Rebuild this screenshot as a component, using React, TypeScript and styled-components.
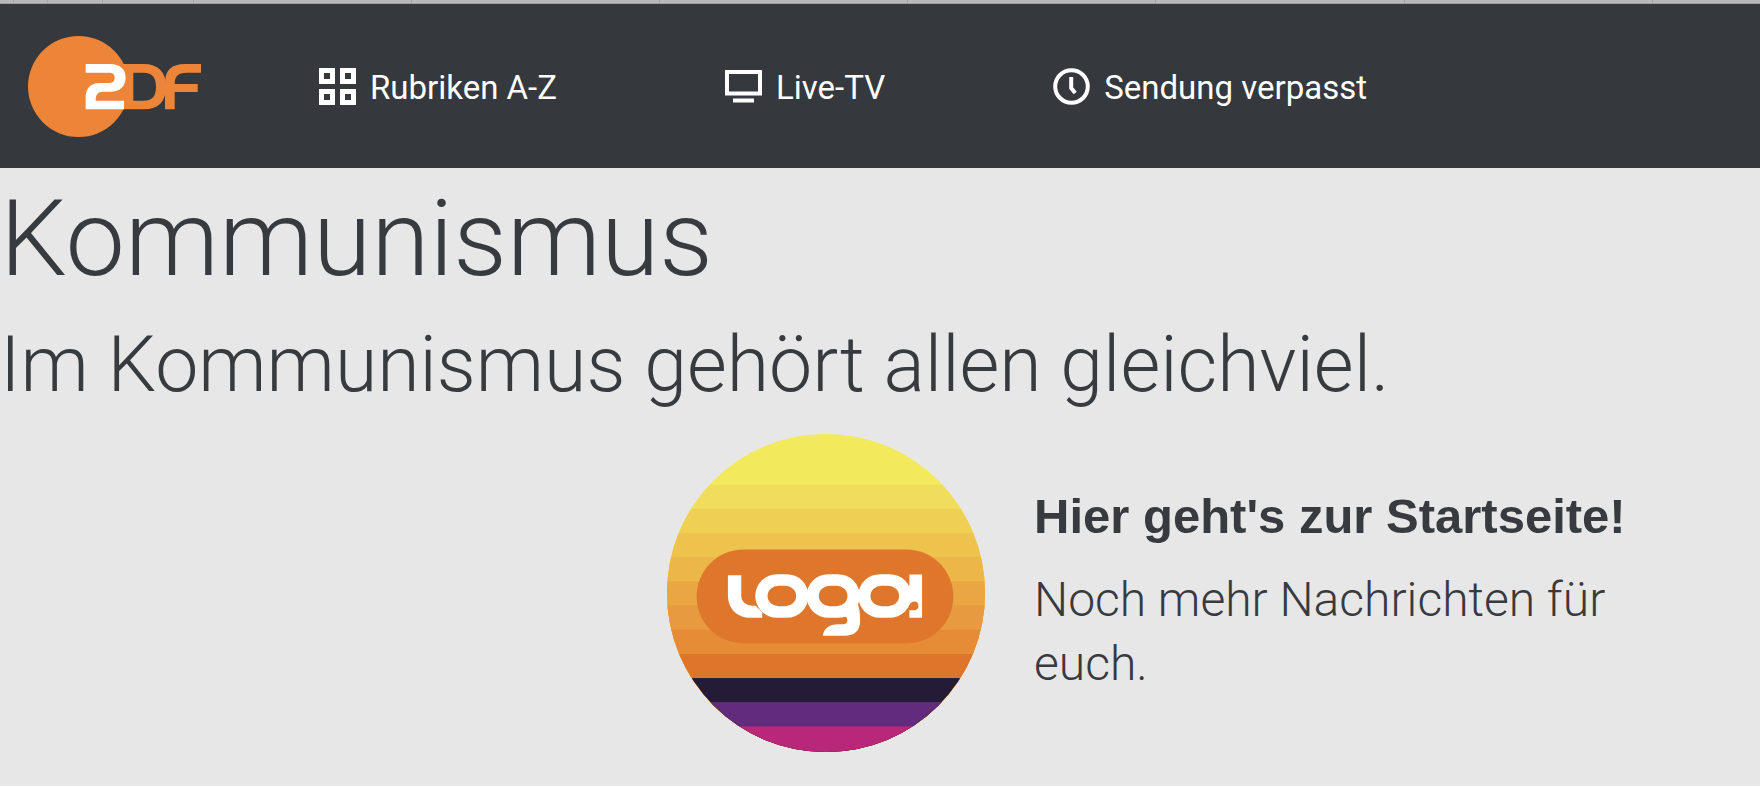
import React from 'react';
import styled, { createGlobalStyle } from 'styled-components';

const GlobalStyle = createGlobalStyle`
  *, *::before, *::after { box-sizing: border-box; }
  body {
    margin: 0;
    background: #ffffff;
    color: #373a3f;
    font-family: Roboto, "Liberation Sans", sans-serif;
    font-weight: 300;
  }
`;

const Page = styled.div`
  background: #e7e7e7;
`;

const TabStrip = styled.div`
  display: flex;
  height: 4px;
  overflow: hidden;
  background: #b8b9b8;
  border-bottom: 1px solid #a0a1a2;
`;

const Tab = styled.span<{ $width: number }>`
  flex: 0 0 auto;
  width: ${(p) => p.$width}px;
  border-right: 1px solid #a4a5a5;
`;

const Header = styled.header`
  display: flex;
  align-items: center;
  min-height: 164px;
  padding: 0 28px;
  background: #35383d;
`;

const HomeLink = styled.a`
  display: flex;
  margin-right: 118px;
`;

const Nav = styled.nav`
  display: flex;
  gap: 168px;
`;

const NavLink = styled.a`
  display: flex;
  align-items: center;
  gap: 14px;
  color: #ffffff;
  font-size: 33px;
  line-height: 40px;
  font-weight: 400;
  white-space: nowrap;
  text-decoration: none;
`;

const NavLabel = styled.span`
  padding-top: 4px;
`;

const Main = styled.main`
  padding: 11px 0 34px;
`;

const Title = styled.h1`
  margin: 0 0 20px;
  font-size: 106px;
  line-height: 120px;
  font-weight: 300;
`;

const Lead = styled.h2`
  margin: 0 0 23px;
  font-size: 77px;
  line-height: 92px;
  font-weight: 300;
`;

const Teaser = styled.a`
  display: flex;
  align-items: center;
  gap: 49px;
  margin-left: 37.9%;
  color: inherit;
  text-decoration: none;
`;

const TeaserText = styled.div`
  flex: 0 1 620px;
  padding-bottom: 6px;
`;

const TeaserTitle = styled.h3`
  margin: 0 0 20px;
  font-family: "Liberation Sans", Arial, sans-serif;
  font-size: 49px;
  line-height: 64px;
  font-weight: 700;
  white-space: nowrap;
`;

const TeaserCopy = styled.p`
  margin: 0;
  font-size: 48px;
  line-height: 64px;
`;

const Icon = styled.svg`
  display: block;
  flex: none;
`;

const tabs = [14, 34, 55, 91, 218, 248, 248, 248, 249, 248, 248];

const bands: Array<[number, string]> = [
  [41, '#f3e95c'],
  [193, '#f0dd5b'],
  [266, '#efd053'],
  [339, '#edc24d'],
  [411, '#ecb648'],
  [484, '#eaa642'],
  [556, '#e79a3e'],
  [629, '#e68c37'],
  [702, '#dd752b'],
  [774, '#241c37'],
  [846, '#632b7b'],
  [919, '#b82779'],
];

const ZdfLogo = () => (
  <Icon width="173" height="101" viewBox="84 108 519 303" role="img" aria-label="ZDF">
    <g fill="#ed8539">
      <circle cx="235.5" cy="259.5" r="151.5" />
      <path
        fillRule="evenodd"
        d="M365 192H430C475 192 498 215 498 260C498 305 475 328 430 328H365ZM400 218H430C457 218 468 232 468 260C468 289 457 302 430 302H400Z"
      />
      <path d="M495 328V250C495 210 515 192 555 192H603V218H560C535 218 524 228 524 252H593V276H524V328Z" />
    </g>
    <path
      fill="#ffffff"
      d="M257 192H330C360 192 377 208 377 232C377 259 360 275 335 275H308C294 275 287 283 287 302H372V328H257V292C257 264 272 250 298 249H325C338 249 344 243 344 233C344 222 338 218 325 218H257Z"
    />
  </Icon>
);

const GridIcon = () => (
  <Icon width="37" height="37" viewBox="0 0 37 37" fill="none" stroke="#ffffff" strokeWidth="5" aria-hidden="true">
    <path d="M2.5 2.5h11v11h-11zM23.5 2.5h11v11h-11zM2.5 23.5h11v11h-11zM23.5 23.5h11v11h-11z" />
  </Icon>
);

const TvIcon = () => (
  <Icon width="37" height="37" viewBox="0 0 37 37" fill="none" stroke="#ffffff" strokeWidth="4" aria-hidden="true">
    <path d="M2 4h33v21.5H2zM8 32.5h21" />
  </Icon>
);

const ClockIcon = () => (
  <Icon width="37" height="37" viewBox="0 0 37 37" fill="none" stroke="#ffffff" strokeWidth="4" aria-hidden="true">
    <circle cx="18.5" cy="18.5" r="16.3" />
    <path d="M18.2 9v11l4 5" />
  </Icon>
);

const LogoBadge = () => (
  <Icon width="318" height="318" viewBox="52 41 955 955" role="img" aria-label="logo!">
    <defs>
      <clipPath id="badge">
        <circle cx="529.5" cy="518.5" r="477.5" />
      </clipPath>
    </defs>
    <g clipPath="url(#badge)">
      {bands.map(([y, fill]) => (
        <rect key={y} x="52" y={y} width="955" height={996 - y} fill={fill} />
      ))}
    </g>
    <rect x="141" y="388" width="771" height="282" rx="141" fill="#de772c" />
    <g fill="#ffffff">
      <path d="M235 465H275V525C275 546 290 557 318 557L338 576V593H305C262 593 235 565 235 525Z" />
      <path d="M592 545H622C630 562 632 580 632 602C632 632 615 647 585 647H520C522 625 540 612 565 612H582C594 612 597 602 590 590H560Z" />
      <path d="M780 463H818V593H780V570H795Q807 570 807 557Q807 544 795 544Q784 545 778 556L768 550V505L780 495Z" />
      {[397, 551, 706].map((cx) => (
        <path
          key={cx}
          fillRule="evenodd"
          d={`M${cx - 14} 462h28a66 65.5 0 0 1 0 131h-28a66 65.5 0 0 1 0-131ZM${cx - 10} 497a33 30.5 0 0 0 0 61h20a33 30.5 0 0 0 0-61Z`}
        />
      ))}
    </g>
  </Icon>
);

export default function App() {
  return (
    <>
      <GlobalStyle />
      <Page>
        <TabStrip aria-hidden="true">
          {tabs.map((width, i) => (
            <Tab key={i} $width={width} />
          ))}
        </TabStrip>
        <Header>
          <HomeLink href="#">
            <ZdfLogo />
          </HomeLink>
          <Nav>
            <NavLink href="#rubriken">
              <GridIcon />
              <NavLabel>Rubriken A-Z</NavLabel>
            </NavLink>
            <NavLink href="#live-tv">
              <TvIcon />
              <NavLabel>Live-TV</NavLabel>
            </NavLink>
            <NavLink href="#sendung-verpasst">
              <ClockIcon />
              <NavLabel>Sendung verpasst</NavLabel>
            </NavLink>
          </Nav>
        </Header>
        <Main>
          <Title>Kommunismus</Title>
          <Lead>Im Kommunismus gehört allen gleichviel.</Lead>
          <Teaser href="#startseite">
            <LogoBadge />
            <TeaserText>
              <TeaserTitle>Hier geht's zur Startseite!</TeaserTitle>
              <TeaserCopy>Noch mehr Nachrichten für euch.</TeaserCopy>
            </TeaserText>
          </Teaser>
        </Main>
      </Page>
    </>
  );
}
